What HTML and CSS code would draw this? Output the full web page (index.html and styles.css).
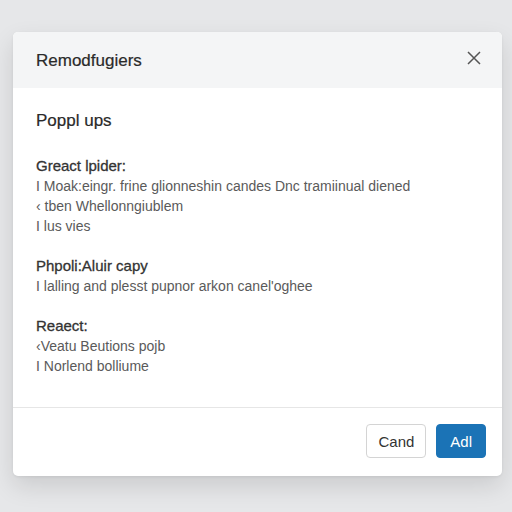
FILE: index.html
```html
<!DOCTYPE html>
<html>
<head>
	<title>Popups</title>
	<link rel="stylesheet" href="styles.css">
</head>
<body>
	<div class="modal">
		<div class="modal-head">
			<h1 class="modal-title">Remodfugiers</h1>
			<button class="close" aria-label="Close">
				<svg width="14" height="14" viewBox="0 0 14 14"><path d="M1 1 L13 13 M13 1 L1 13" stroke="#555" stroke-width="1.5" fill="none"/></svg>
			</button>
		</div>
		<div class="modal-body">
			<h2 class="section-title">Poppl ups</h2>
			<div class="group">
				<h3 class="group-title">Greact lpider:</h3>
				<p>I Moak:eingr. frine glionneshin candes Dnc tramiinual diened</p>
				<p>‹ tben Whellonngiublem</p>
				<p>I lus vies</p>
			</div>
			<div class="group">
				<h3 class="group-title">Phpoli:Aluir capy</h3>
				<p>I lalling and plesst pupnor arkon canel'oghee</p>
			</div>
			<div class="group">
				<h3 class="group-title">Reaect:</h3>
				<p>‹Veatu Beutions pojb</p>
				<p>I Norlend bolliume</p>
			</div>
		</div>
		<div class="modal-foot">
			<button class="btn">Cand</button>
			<button class="btn btn-primary">Adl</button>
		</div>
	</div>
</body>
</html>
```

FILE: styles.css
```css
* {
  box-sizing: border-box;
  margin: 0;
  padding: 0;
}

body {
  background-color: #e6e7e9;
  font-family: 'Liberation Sans', Arial, sans-serif;
  color: #333;
  width: 512px;
  height: 512px;
  overflow: hidden;
}

.modal {
  margin: 32px 10px 0 13px;
  background-color: #fff;
  border-radius: 5px;
  box-shadow: 0 10px 24px rgba(0, 0, 0, 0.12), 0 1px 3px rgba(0, 0, 0, 0.06);
  overflow: hidden;
}

.modal-head {
  height: 56px;
  background-color: #f4f5f6;
  display: flex;
  align-items: center;
  justify-content: space-between;
  padding: 0 18px 0 23px;
}

.modal-title {
  font-size: 17px;
  font-weight: normal;
  color: #2a2a2a;
  -webkit-text-stroke: 0.2px #2a2a2a;
  margin-top: 2px;
}

.close {
  border: none;
  background: none;
  width: 20px;
  height: 20px;
  display: flex;
  align-items: center;
  justify-content: center;
  margin-top: -4px;
}

.modal-body {
  padding: 23px 23px 31px;
}

.section-title {
  font-size: 17px;
  font-weight: normal;
  line-height: 20px;
  color: #2a2a2a;
  -webkit-text-stroke: 0.2px #2a2a2a;
  margin-bottom: 25px;
}

.group + .group {
  margin-top: 20px;
}

.group-title {
  font-size: 15px;
  font-weight: normal;
  line-height: 20px;
  color: #333;
  -webkit-text-stroke: 0.3px #333;
}

.group p {
  font-size: 14px;
  line-height: 20px;
  color: #5a5a5a;
}

.modal-foot {
  border-top: 1px solid #e6e6e6;
  display: flex;
  justify-content: flex-end;
  gap: 10px;
  padding: 16px 16px 18px;
}

.btn {
  height: 34px;
  padding: 0 11px;
  font-family: inherit;
  font-size: 15px;
  color: #333;
  background-color: #fff;
  border: 1px solid #d4d4d4;
  border-radius: 4px;
}

.btn-primary {
  background-color: #1b73b6;
  border-color: #1b73b6;
  color: #fff;
  padding: 0 13px;
}
```
